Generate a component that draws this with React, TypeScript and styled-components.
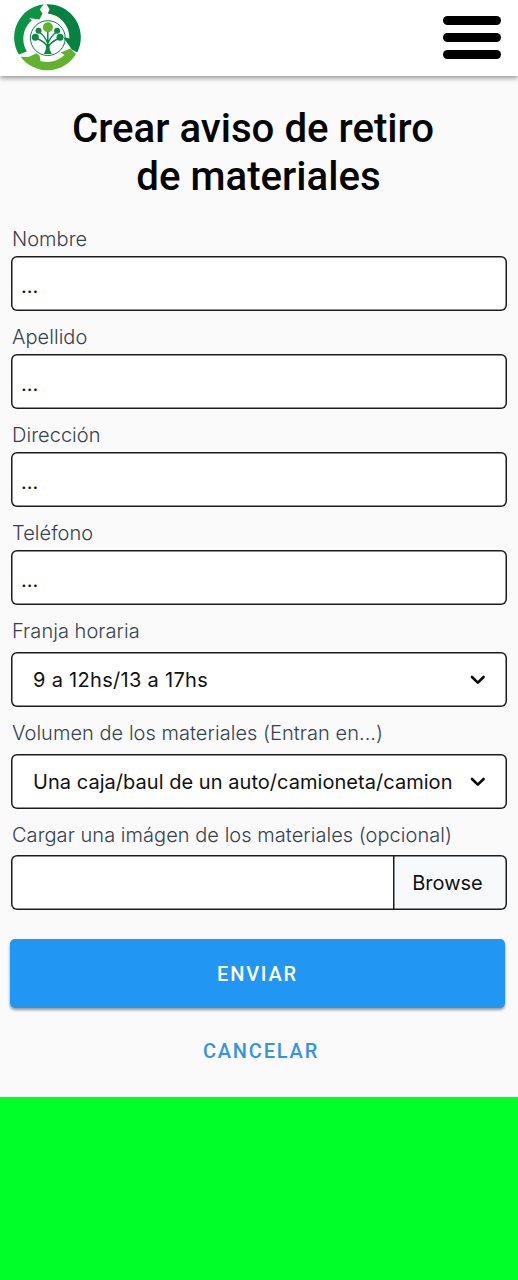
import React from 'react';
import styled, { createGlobalStyle } from 'styled-components';

const GlobalStyle = createGlobalStyle`
  *, *::before, *::after { box-sizing: border-box; }
  body { margin: 0; background: #00ff29; }
`;

const Screen = styled.div`
  height: 1097px;
  display: flex;
  flex-direction: column;
  background: #fafafb;
  font-family: Inter, 'Liberation Sans', sans-serif;
  color: #111;
`;

const Header = styled.header`
  height: 76px;
  flex: none;
  display: flex;
  align-items: flex-start;
  justify-content: space-between;
  padding: 3px 16px 0 13px;
  background: #fff;
  box-shadow: 0 2px 5px rgba(0, 0, 0, 0.42);
`;

const MenuButton = styled.button`
  width: 60px;
  margin-top: 13px;
  padding: 0 1px;
  border: 0;
  background: none;
  display: flex;
  flex-direction: column;
  gap: 8px;
`;

const Bar = styled.span`
  height: 9px;
  border-radius: 5px;
  background: #000;
`;

const Title = styled.h1`
  margin: 29px 0 0;
  padding-right: 12px;
  text-align: center;
  font: 500 40.2px/48px Roboto, sans-serif;
  color: #050505;

  span { display: block; }
  span + span { padding-left: 11px; }
`;

const Form = styled.form`
  padding: 23px 11px 0;
  display: flex;
  flex-direction: column;
`;

const Field = styled.div<{ $gap?: number }>`
  display: flex;
  flex-direction: column;
  gap: ${(p) => p.$gap ?? 2}px;
  margin-bottom: 11px;
`;

const Label = styled.label`
  height: 30px;
  padding-left: 1px;
  font-size: 20px;
  line-height: 30px;
  font-weight: 300;
  letter-spacing: 0.04px;
  color: #36424e;
  white-space: nowrap;
`;

const Box = styled.div`
  height: 55px;
  display: flex;
  align-items: center;
  border-radius: 6px;
  background: #fff;
  box-shadow: inset 0 0 0 1.5px #1c1c1e;
  font-size: 20px;
  line-height: 30px;
  overflow: hidden;
  white-space: nowrap;
`;

const TextBox = styled(Box)`
  padding: 4px 10px 0;
`;

const SelectBox = styled(Box)<{ $tracking?: number }>`
  justify-content: space-between;
  padding: 0 20px 0 22px;
  letter-spacing: ${(p) => p.$tracking ?? 0.04}px;
`;

const FileBox = styled(Box)`
  justify-content: flex-end;
`;

const Browse = styled.span`
  width: 114px;
  height: 55px;
  display: flex;
  align-items: center;
  justify-content: center;
  padding-right: 5px;
  border-radius: 0 6px 6px 0;
  background: #f8f9fb;
  box-shadow: inset 0 0 0 1.5px #1c1c1e;
`;

const Submit = styled.button`
  width: 495px;
  height: 69px;
  margin: 18px 0 0 -1px;
  border: 0;
  border-radius: 5px;
  background: #2296f3;
  box-shadow: 0 2px 3px rgba(0, 0, 0, 0.4);
  color: #fff;
  font: 500 20px/24px Roboto, sans-serif;
  letter-spacing: 1.8px;
`;

const Cancel = styled.button`
  align-self: center;
  margin: 31px 0 0 4px;
  padding: 0;
  border: 0;
  background: none;
  color: #3394e3;
  font: 500 20px/24px Roboto, sans-serif;
  letter-spacing: 1.8px;
`;

const Logo = () => (
  <svg width="70" height="70" viewBox="13 3 70 70" aria-hidden="true">
    <path d="M18.9 54.6A33.3 33.3 0 0 1 43.8 4.3L39.8 9.6L42.6 13.6L39.4 19.6L29 18L31.8 20.2A24.6 24.6 0 0 0 26.8 51.4Z" fill="#0b9444" />
    <path d="M46.5 4.2A33.3 33.3 0 0 1 77.3 52.4L71.8 49.6L63.3 37.4L69.4 38.2A24.6 24.6 0 0 0 47.8 13.4L49.6 9.2Z" fill="#058240" />
    <path d="M20.6 56.8A33.3 33.3 0 0 0 76 54L70.4 48.4L60.4 52.6L64.4 55A24.6 24.6 0 0 1 40.5 61L39.7 55.8L36.5 53.3L28.5 57Z" fill="#62b22f" />
    <circle cx="47.8" cy="38.1" r="17.4" fill="none" stroke="#087b48" strokeWidth="1" />
    <path d="M47.8 50V31M47.4 47Q46 42.5 36 38M48.2 47Q50 42.5 59.5 38M47.6 43Q45 36 39 32M48 43Q51 36 56.5 32" fill="none" stroke="#0d8545" strokeWidth="1.5" />
    <path d="M43.8 54Q46.4 50 46.4 44H49.2Q49.2 50 51.8 54Z" fill="#0d8545" />
    <circle cx="47.9" cy="27.3" r="5" fill="#64b32e" />
    <g fill="#0b8843">
      <circle cx="38.5" cy="30.8" r="3" />
      <circle cx="57.1" cy="30.8" r="3" />
      <circle cx="35.3" cy="37.2" r="3.5" />
      <circle cx="60" cy="37.2" r="3.5" />
    </g>
  </svg>
);

const Chevron = () => (
  <svg width="18" height="12" viewBox="0 0 18 12" fill="none" aria-hidden="true">
    <path d="M3 3L8.8 8.6L14.6 3" stroke="#090909" strokeWidth="2.6" strokeLinecap="round" strokeLinejoin="round" />
  </svg>
);

const textFields = ['Nombre', 'Apellido', 'Dirección', 'Teléfono'];

export default function App() {
  return (
    <>
      <GlobalStyle />
      <Screen>
        <Header>
          <Logo />
          <MenuButton aria-label="Menú">
            <Bar /><Bar /><Bar />
          </MenuButton>
        </Header>
        <Title><span>Crear aviso de retiro</span><span>de materiales</span></Title>
        <Form>
          {textFields.map((name) => (
            <Field key={name}>
              <Label>{name}</Label>
              <TextBox>...</TextBox>
            </Field>
          ))}
          <Field $gap={6}>
            <Label>Franja horaria</Label>
            <SelectBox $tracking={0.3}>9 a 12hs/13 a 17hs<Chevron /></SelectBox>
          </Field>
          <Field $gap={6}>
            <Label>Volumen de los materiales (Entran en...)</Label>
            <SelectBox>Una caja/baul de un auto/camioneta/camion<Chevron /></SelectBox>
          </Field>
          <Field $gap={5}>
            <Label>Cargar una imágen de los materiales (opcional)</Label>
            <FileBox><Browse>Browse</Browse></FileBox>
          </Field>
          <Submit type="button">ENVIAR</Submit>
          <Cancel type="button">CANCELAR</Cancel>
        </Form>
      </Screen>
    </>
  );
}
